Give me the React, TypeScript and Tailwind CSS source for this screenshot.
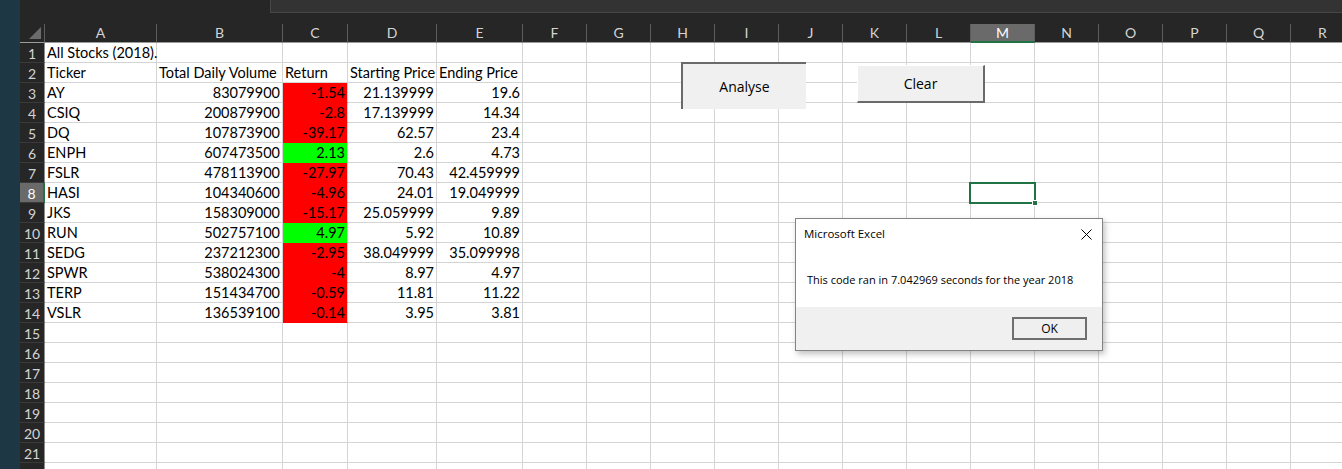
import React from 'react'

type Row = [string, string, string, string, string]

const stocks: Row[] = [
  ['AY', '83079900', '-1.54', '21.139999', '19.6'],
  ['CSIQ', '200879900', '-2.8', '17.139999', '14.34'],
  ['DQ', '107873900', '-39.17', '62.57', '23.4'],
  ['ENPH', '607473500', '2.13', '2.6', '4.73'],
  ['FSLR', '478113900', '-27.97', '70.43', '42.459999'],
  ['HASI', '104340600', '-4.96', '24.01', '19.049999'],
  ['JKS', '158309000', '-15.17', '25.059999', '9.89'],
  ['RUN', '502757100', '4.97', '5.92', '10.89'],
  ['SEDG', '237212300', '-2.95', '38.049999', '35.099998'],
  ['SPWR', '538024300', '-4', '8.97', '4.97'],
  ['TERP', '151434700', '-0.59', '11.81', '11.22'],
  ['VSLR', '136539100', '-0.14', '3.95', '3.81'],
]

const letters = ['A', 'B', 'C', 'D', 'E', 'F', 'G', 'H', 'I', 'J', 'K', 'L', 'M', 'N', 'O', 'P', 'Q', 'R']

const gridCols =
  'grid grid-cols-[25px_112px_126px_65px_89px_86px_64px_64px_64px_64px_64px_64px_64px_64px_64px_64px_64px_64px_64px]'

const cellFont = { fontFamily: 'Lato, "Open Sans", sans-serif' }

function Cell({ text, right, fill }: { text?: string; right?: boolean; fill?: 'red' | 'green' }) {
  const bg = fill === 'red' ? 'bg-[#ff0000] border-b-[#ff0000]' : fill === 'green' ? 'bg-[#00ff00] border-b-[#00ff00]' : 'bg-white'
  return (
    <div
      className={`h-[20px] border-r border-b border-[#d4d4d4] ${bg} flex items-end overflow-visible whitespace-nowrap text-[14.5px] leading-[18px] text-black ${
        right ? 'justify-end pr-[2px]' : 'pl-[2px]'
      }`}
    >
      {text}
    </div>
  )
}

function SheetRow({ n }: { n: number }) {
  const selected = n === 8
  const stock = n >= 3 && n <= 14 ? stocks[n - 3] : null
  let cells: React.ReactNode[] = []
  if (n === 1) cells = [<Cell key="a" text="All Stocks (2018)." />]
  else if (n === 2)
    cells = [
      <Cell key="a" text="Ticker" />,
      <Cell key="b" text="Total Daily Volume" />,
      <Cell key="c" text="Return" />,
      <Cell key="d" text="Starting Price" />,
      <Cell key="e" text="Ending Price" />,
    ]
  else if (stock) {
    const up = !stock[2].startsWith('-')
    cells = [
      <Cell key="a" text={stock[0]} />,
      <Cell key="b" text={stock[1]} right />,
      <Cell key="c" text={stock[2]} right fill={up ? 'green' : 'red'} />,
      <Cell key="d" text={stock[3]} right />,
      <Cell key="e" text={stock[4]} right />,
    ]
  }
  while (cells.length < 18) {
    const i = cells.length
    if (n === 8 && i === 12) {
      cells.push(
        <div key={i} className="relative h-[20px] border-r border-b border-[#d4d4d4] bg-white">
          {/* active cell outline */}
          <div className="absolute -left-[2px] -top-[1px] w-[67px] h-[22px] border-2 border-[#217346]" />
          <div className="absolute left-[61px] top-[17px] w-[6px] h-[6px] bg-[#217346] border border-white" />
        </div>,
      )
    } else cells.push(<Cell key={i} />)
  }
  return (
    <div className={gridCols}>
      <div
        className={`h-[20px] flex items-center justify-center pt-[2px] text-[14px] border-b border-[#3a3a3a] ${
          selected ? 'bg-[#6a6a6a] text-white border-r-2 border-r-[#217346]' : 'bg-[#262626] text-[#d4d4d4] border-r border-r-[#8c8c8c]'
        }`}
      >
        {n <= 21 ? n : ''}
      </div>
      {cells}
    </div>
  )
}

export default function App() {
  const rows = Array.from({ length: 22 }, (_, i) => i + 1)
  return (
    <div className="relative w-[1342px] h-[469px] overflow-hidden bg-[#262626] flex" style={cellFont}>
      {/* desktop edge */}
      <div className="w-[20px] shrink-0 bg-[#1d3844]" />

      <div className="flex-1 min-w-0">
        {/* formula bar strip */}
        <div className="h-[13px] flex">
          <div className="w-[250px]" />
          <div className="flex-1 bg-[#333333] border-l border-b border-[#474747]" />
        </div>
        <div className="h-[11px]" />

        {/* column headers */}
        <div className={gridCols}>
          <div className="h-[19px] border-r border-b border-[#5c5c5c] border-b-[#9b9b9b] flex items-end justify-end pr-[3px] pb-[3px]">
            <svg width="12" height="12" viewBox="0 0 12 12">
              <polygon points="12,0 12,12 0,12" fill="#6b6b6b" />
            </svg>
          </div>
          {letters.map((l) => (
            <div
              key={l}
              className={`h-[19px] flex items-center justify-center text-[14px] leading-none border-r border-[#5c5c5c] ${
                l === 'M' ? 'bg-[#6a6a6a] text-white border-b-2 border-b-[#217346]' : 'text-[#d4d4d4] border-b border-b-[#9b9b9b]'
              }`}
            >
              {l}
            </div>
          ))}
        </div>

        {rows.map((n) => (
          <SheetRow key={n} n={n} />
        ))}
      </div>

      {/* form buttons */}
      <div
        className="absolute left-[681px] top-[62px] w-[125px] h-[47px] bg-[#f0f0f0] border-t-2 border-l-2 border-[#6a6a6a] flex items-center justify-center text-[14px] text-black"
        style={{ fontFamily: '"Open Sans", sans-serif' }}
      >
        Analyse
      </div>
      <div
        className="absolute left-[857px] top-[65px] w-[128px] h-[38px] bg-[#f0f0f0] border-t border-l border-white border-r-2 border-b-2 border-r-[#6a6a6a] border-b-[#6a6a6a] flex items-center justify-center text-[14px] text-black"
        style={{ fontFamily: '"Open Sans", sans-serif' }}
      >
        Clear
      </div>

      {/* message box */}
      <div
        className="absolute left-[795px] top-[218px] w-[308px] h-[133px] bg-white border border-[#838383] shadow-[2px_3px_6px_rgba(0,0,0,0.25)] flex flex-col text-black"
        style={{ fontFamily: '"Open Sans", sans-serif' }}
      >
        <div className="h-[30px] shrink-0 flex items-center justify-between pl-[8px] pr-[10px] text-[11.5px]">
          <span>Microsoft Excel</span>
          <svg width="11" height="11" viewBox="0 0 11 11">
            <path d="M0.5 0.5 L10.5 10.5 M10.5 0.5 L0.5 10.5" stroke="#000" strokeWidth="1" />
          </svg>
        </div>
        <div className="flex-1 pl-[11px] pt-[23px] text-[11px] leading-[16px]">
          This code ran in 7.042969 seconds for the year 2018
        </div>
        <div className="h-[43px] shrink-0 bg-[#f0f0f0] flex justify-end items-start pt-[10px] pr-[15px]">
          <div className="w-[75px] h-[23px] border-2 border-[#6e6e6e] bg-[#efefef] flex items-center justify-center text-[12px]">
            OK
          </div>
        </div>
      </div>
    </div>
  )
}
